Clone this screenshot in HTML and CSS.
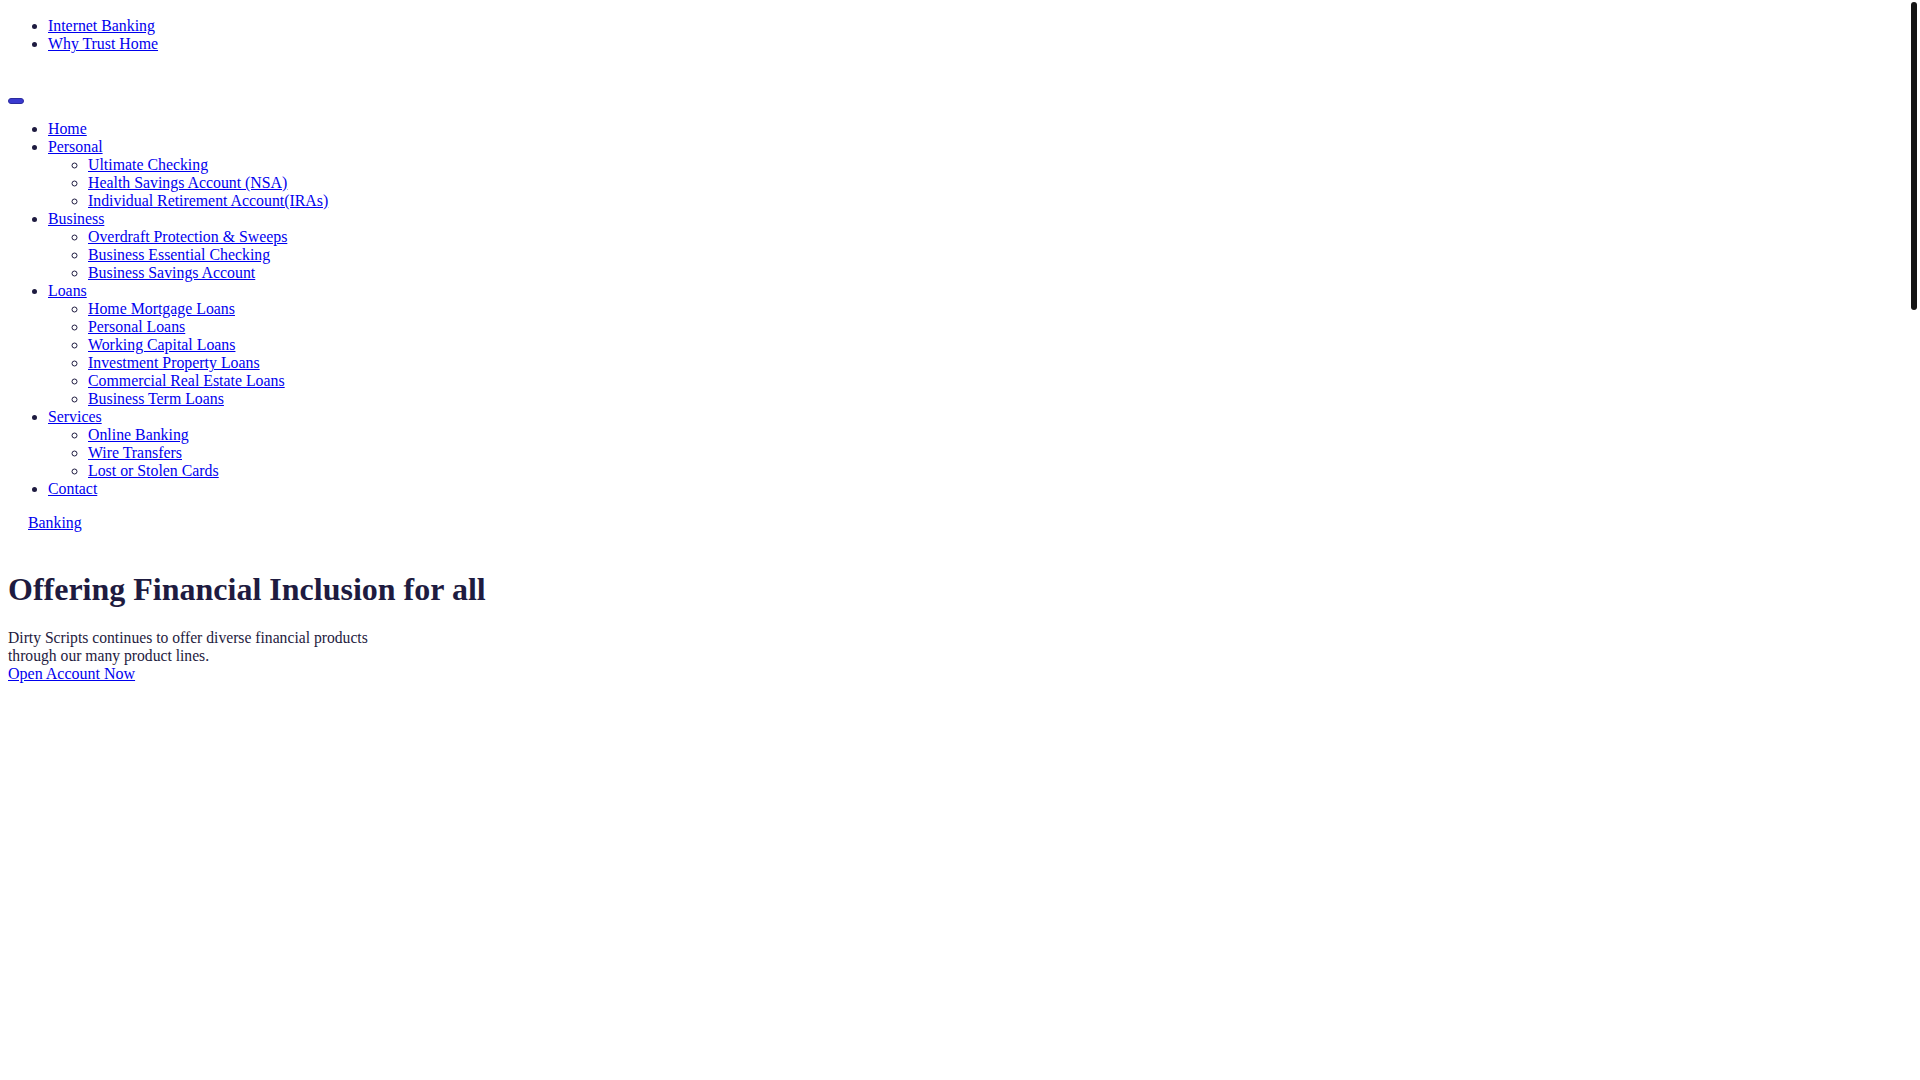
FILE: index.html
```html
<!DOCTYPE html>
<html lang="en">
<head>
<meta charset="utf-8">
<title>Dirty Scripts</title>
<link rel="stylesheet" href="styles.css">
</head>
<body>
<ul class="topbar">
  <li><a href="#">Internet Banking</a></li>
  <li><a href="#">Why Trust Home</a></li>
</ul>
<div class="navbar">
  <button class="toggler" type="button" aria-label="Menu"></button>
  <ul class="menu">
    <li><a href="#">Home</a></li>
    <li><a href="#">Personal</a>
      <ul>
        <li><a href="#">Ultimate Checking</a></li>
        <li><a href="#">Health Savings Account (NSA)</a></li>
        <li><a href="#">Individual Retirement Account(IRAs)</a></li>
      </ul>
    </li>
    <li><a href="#">Business</a>
      <ul>
        <li><a href="#">Overdraft Protection &amp; Sweeps</a></li>
        <li><a href="#">Business Essential Checking</a></li>
        <li><a href="#">Business Savings Account</a></li>
      </ul>
    </li>
    <li><a href="#">Loans</a>
      <ul>
        <li><a href="#">Home Mortgage Loans</a></li>
        <li><a href="#">Personal Loans</a></li>
        <li><a href="#">Working Capital Loans</a></li>
        <li><a href="#">Investment Property Loans</a></li>
        <li><a href="#">Commercial Real Estate Loans</a></li>
        <li><a href="#">Business Term Loans</a></li>
      </ul>
    </li>
    <li><a href="#">Services</a>
      <ul>
        <li><a href="#">Online Banking</a></li>
        <li><a href="#">Wire Transfers</a></li>
        <li><a href="#">Lost or Stolen Cards</a></li>
      </ul>
    </li>
    <li><a href="#">Contact</a></li>
  </ul>
</div>
<div class="cta"><a href="#">Banking</a></div>
<section class="hero">
  <h1 class="hero-title">Offering Financial Inclusion for all</h1>
  <p class="hero-text">Dirty Scripts continues to offer diverse financial products<br>through our many product lines.<br><a class="hero-link" href="#">Open Account Now</a></p>
</section>
<div class="scroll-thumb" aria-hidden="true"></div>
</body>
</html>
```
FILE: styles.css
```css
body {
  margin: 0;
  padding: 17px 8px 8px;
  font-family: "Liberation Serif", "Times New Roman", serif;
  font-size: 15.85px;
  line-height: 18px;
  color: #1e1b40;
  background: #ffffff;
}
a {
  color: #0000ee;
}
.topbar {
  margin: 0 0 16px;
  padding-left: 40px;
}
.navbar {
  padding-top: 29px;
}
.toggler {
  display: block;
  width: 16px;
  height: 6px;
  padding: 0;
  margin: 0;
  border: 1px solid #2b2b9e;
  border-radius: 3px;
  background: #3a3ad0;
}
.menu {
  margin: 16px 0;
  padding-left: 40px;
}
.menu ul {
  margin: 0;
  padding-left: 40px;
}
.cta {
  padding-left: 20px;
}
.hero-title {
  margin: 39px 0 21px;
  font-size: 32px;
  line-height: 37px;
  font-weight: bold;
}
.hero-text {
  margin: 0;
  font-size: 15.65px;
}
.hero-link {
  font-size: 16px;
}
.scroll-thumb {
  position: fixed;
  top: 2px;
  right: 3px;
  width: 6px;
  height: 308px;
  border-radius: 3px;
  background: #141414;
}
```
